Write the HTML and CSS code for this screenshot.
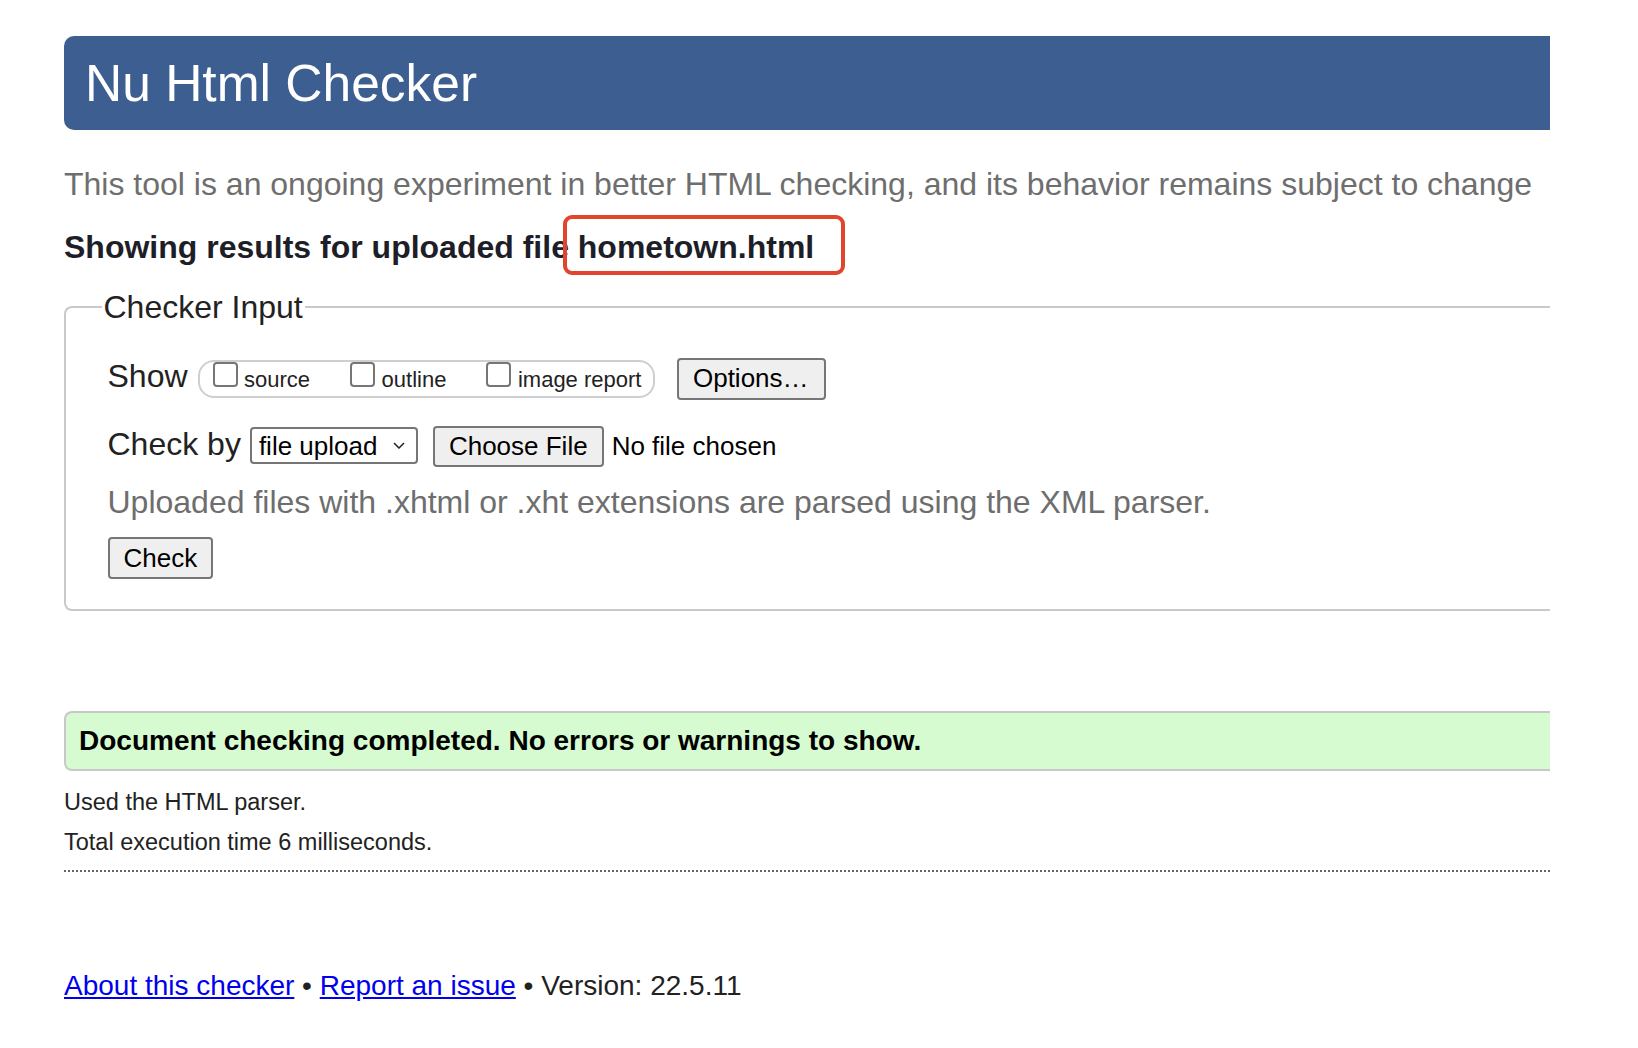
FILE: index.html
```html
<!DOCTYPE html>
<html lang="en">
<head>
<meta charset="utf-8">
<title>Nu Html Checker</title>
<link rel="stylesheet" href="styles.css">
</head>
<body>
<header class="banner">
  <h1 class="banner-title">Nu Html Checker</h1>
</header>
<p class="tagline">This tool is an ongoing experiment in better HTML checking, and its behavior remains subject to change</p>
<p class="results-for">Showing results for uploaded file <span class="filename">hometown.html</span></p>
<form class="checker-form">
  <fieldset class="checker-input">
    <legend class="checker-legend">Checker Input</legend>
    <div class="row">
      <span class="row-label">Show</span>
      <span class="show-options"><label class="opt"><input type="checkbox" class="box">source</label><label class="opt"><input type="checkbox" class="box">outline</label><label class="opt"><input type="checkbox" class="box">image report</label></span>
      <button type="button" class="btn btn-options">Options…</button>
    </div>
    <div class="row row-check-by">
      <span class="row-label label-check-by">Check by</span>
      <span class="select-wrap"><select class="select"><option>file upload</option></select><svg class="chevron" width="12" height="7" viewBox="0 0 12 7"><path d="M1 1 L6 6 L11 1" fill="none" stroke="#222" stroke-width="1.5"/></svg></span>
      <button type="button" class="btn btn-file">Choose File</button>
      <span class="file-status">No file chosen</span>
    </div>
    <p class="note">Uploaded files with .xhtml or .xht extensions are parsed using the XML parser.</p>
    <button type="button" class="btn btn-check">Check</button>
  </fieldset>
</form>
<div class="success">Document checking completed. No errors or warnings to show.</div>
<div class="meta-block">
  <p class="meta">Used the HTML parser.</p>
  <p class="meta">Total execution time 6 milliseconds.</p>
</div>
<hr class="divider">
<footer class="footer"><a href="#" class="link">About this checker</a> • <a href="#" class="link">Report an issue</a> • Version: 22.5.11</footer>
</body>
</html>
```

FILE: styles.css
```css
html, body {
  background: #fff;
}
body {
  margin: 0;
  padding: 36px 88px 0 64px;
  font-family: "Liberation Sans", Arial, sans-serif;
  color: #222;
}
.banner {
  background: #3d5e90;
  border-radius: 10px 0 0 10px;
  padding: 18px 21px;
}
.banner-title {
  margin: 0;
  font-size: 51.5px;
  font-weight: normal;
  line-height: 58px;
  color: #fff;
}
.tagline {
  margin: 36px 0 0;
  font-size: 32px;
  line-height: 36px;
  color: #6e6e6e;
  white-space: nowrap;
}
.results-for {
  margin: 26.5px 0 0;
  font-size: 32px;
  line-height: 36px;
  font-weight: bold;
  color: #1e1e28;
}
.filename {
  position: relative;
}
.filename::after {
  content: "";
  position: absolute;
  left: -15px;
  top: -14px;
  width: 282px;
  height: 60px;
  box-sizing: border-box;
  border: 4px solid #e2442e;
  border-radius: 9px;
}
.checker-form {
  margin: 24px 0 0;
}
.checker-input {
  margin: 0;
  min-width: 0;
  border: 2px solid #c9c9c9;
  border-right: 0;
  border-radius: 8px 0 0 8px;
  padding: 33px 0 30px 41.5px;
}
.checker-legend {
  margin-left: -6px;
  padding: 0 2px;
  font-size: 32px;
  line-height: 36px;
  color: #222;
}
.row {
  display: flex;
  align-items: baseline;
}
.row-check-by {
  margin-top: 26px;
}
.row-label {
  font-size: 32px;
  line-height: 36px;
  margin-right: 10px;
}
.label-check-by {
  margin-right: 9px;
}
.show-options {
  display: inline-block;
  box-sizing: border-box;
  height: 38px;
  border: 2px solid #cfcfcf;
  border-radius: 16px;
  padding: 0 11.5px 0 13px;
  font-size: 22px;
  line-height: 30px;
  white-space: nowrap;
}
.opt + .opt {
  margin-left: 40px;
}
.box {
  appearance: none;
  -webkit-appearance: none;
  display: inline-block;
  vertical-align: baseline;
  width: 25px;
  height: 25px;
  margin: 0 6.5px 0 0;
  box-sizing: border-box;
  border: 2px solid #767676;
  border-radius: 4px;
  background: #fff;
}
.btn {
  font-family: "Liberation Sans", Arial, sans-serif;
  font-size: 26px;
  color: #000;
  background: #efefef;
  border: 2px solid #767676;
  border-radius: 4px;
  height: 42px;
  padding: 0 14px;
  box-sizing: border-box;
}
.btn-options {
  margin-left: 22px;
  padding: 0 15px 0 14px;
}
.select-wrap {
  position: relative;
  display: inline-block;
}
.select {
  appearance: none;
  -webkit-appearance: none;
  width: 168px;
  height: 37px;
  box-sizing: border-box;
  border: 2px solid #767676;
  border-radius: 4px;
  background: #fff;
  padding: 0 30px 0 7px;
  font-family: "Liberation Sans", Arial, sans-serif;
  font-size: 26px;
  color: #000;
}
.chevron {
  position: absolute;
  right: 13px;
  top: 15px;
}
.btn-file {
  margin-left: 15px;
  height: 41px;
}
.file-status {
  margin-left: 8px;
  font-size: 26px;
  color: #000;
}
.note {
  margin: 17.5px 0 0;
  font-size: 32px;
  line-height: 36px;
  color: #6e6e6e;
  white-space: nowrap;
}
.btn-check {
  margin-top: 17px;
  display: block;
}
.success {
  margin-top: 100px;
  background: #d6fbd0;
  border: 2px solid #c8c8c8;
  border-right: 0;
  border-radius: 8px 0 0 8px;
  padding: 12px 13px;
  font-size: 28px;
  line-height: 32px;
  font-weight: bold;
  color: #000;
}
.meta-block {
  margin-top: 11px;
}
.meta {
  margin: 0;
  font-size: 23.5px;
  line-height: 40px;
  color: #222;
}
.divider {
  margin: 8px 0 0;
  border: 0;
  border-top: 2px dotted #666;
  height: 0;
}
.footer {
  margin-top: 98px;
  font-size: 28px;
  line-height: 32px;
  color: #222;
}
.link {
  color: #0000ee;
  text-decoration: underline;
}
```
